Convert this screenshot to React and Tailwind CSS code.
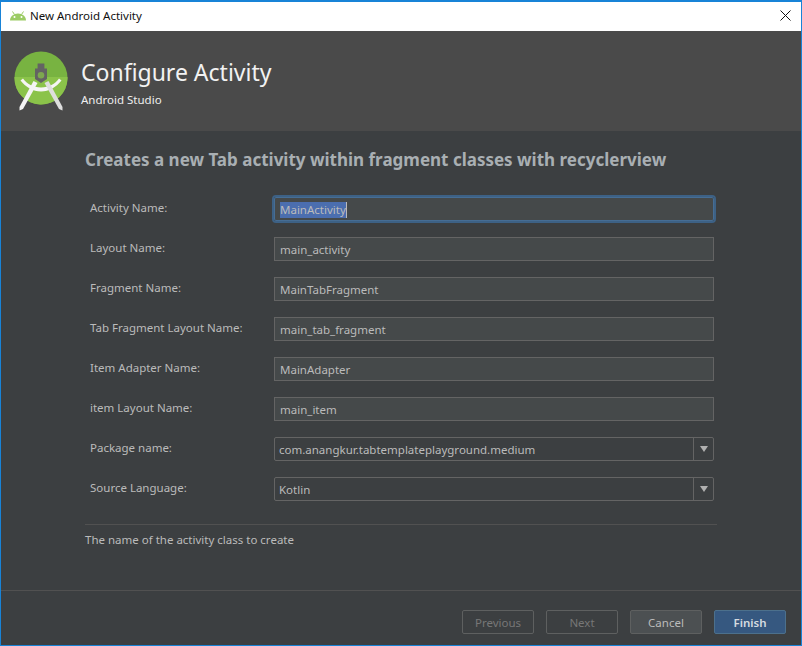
import React from "react";

const font = "font-['Noto_Sans','Open_Sans',sans-serif]";

const rows = [
  { label: "Activity Name:", value: "MainActivity", focused: true },
  { label: "Layout Name:", value: "main_activity" },
  { label: "Fragment Name:", value: "MainTabFragment" },
  { label: "Tab Fragment Layout Name:", value: "main_tab_fragment" },
  { label: "Item Adapter Name:", value: "MainAdapter" },
  { label: "item Layout Name:", value: "main_item" },
  { label: "Package name:", value: "com.anangkur.tabtemplateplayground.medium", select: true },
  { label: "Source Language:", value: "Kotlin", select: true },
];

const AndroidHead = () => (
  <svg width="18" height="10" viewBox="0 0 18 10" className="shrink-0">
    <path d="M1 9.500C1 5.500 4.500 2.500 9 2.500S17 5.500 17 9.500Z" fill="#9ccc65" />
    <path d="M3.500.5 5.500 3.500M14.500.5 12.500 3.500" stroke="#9ccc65" strokeWidth="1" />
    <circle cx="5.500" cy="6" r="1" fill="#fff" />
    <circle cx="12.500" cy="6" r="1" fill="#fff" />
  </svg>
);

const StudioLogo = () => (
  <svg width="54" height="60" viewBox="0 0 54 60" className="shrink-0">
    <circle cx="27" cy="27" r="26.500" fill="#78b341" />
    <path d="M.5 26a26.500 26.500 0 0 0 53 2q0-1 0-2Z" fill="#8bc34a" />
    <path d="M9 27.500C13 33 19 36.500 27 36.500S41 33 45 27.500L47.500 29.500C42.500 36 35 40.500 27 40.500S11.500 36 6.500 29.500Z" fill="#f5f5f5" />
    <path d="M19.500 30 23.500 32 9 58 5.500 59.500 5.500 56Z" fill="#f4f4f4" />
    <path d="M34.500 30 30.500 32 45 58 48.500 59.500 48.500 56Z" fill="#dedede" />
    <path d="M23.600 12.600h6.800v5H33V28l-6 4-6-4V17.600h2.600Z" fill="#636363" />
    <circle cx="27" cy="24.300" r="3.300" fill="#7da84f" />
  </svg>
);

const Field = ({ value, focused, select }) => {
  if (select) {
    return (
      <div className="w-[440px] h-6 flex items-stretch border border-[#646464] rounded-[2px]">
        <div className="flex-1 px-1 pt-px flex items-center text-[11.5px] text-[#bbbbbb]">{value}</div>
        <div className="w-[20px] border-l border-[#646464] flex items-center justify-center">
          <svg width="8" height="6" viewBox="0 0 8 6">
            <path d="M0 0h8L4 6Z" fill="#b0b0b0" />
          </svg>
        </div>
      </div>
    );
  }
  return (
    <div
      className={
        focused
          ? "w-[440px] h-6 flex items-center px-[5px] pt-px bg-[#45494a] rounded-[2px] outline-2 outline-[#3d6185] border border-[#466d94]"
          : "w-[440px] h-6 flex items-center px-[5px] pt-px bg-[#45494a] border border-[#646464]"
      }
    >
      {focused ? (
        <span className="bg-[#4b6eaf] text-[#bbbbbb] text-[11.5px] leading-[16px] border-r border-[#bbbbbb]">{value}</span>
      ) : (
        <span className="text-[#bbbbbb] text-[11.5px] leading-[16px]">{value}</span>
      )}
    </div>
  );
};

const Button = ({ children, kind }) => {
  const styles = {
    disabled: "border-[#5e6060] text-[#777777]",
    normal: "bg-[#4c5052] border-[#5e6060] text-[#bbbbbb]",
    primary: "bg-[#365880] border-[#4c708c] text-[#d5dbe0] font-semibold",
  };
  return (
    <div className={`w-[72px] h-6 pt-px flex items-center justify-center rounded-[2px] border text-[11.5px] ${styles[kind]}`}>
      {children}
    </div>
  );
};

export default function App() {
  return (
    <div className={`w-[802px] h-[646px] flex flex-col border border-t-2 border-[#1883d7] bg-[#3c3f41] overflow-hidden ${font}`}>
      <div className="h-[29px] shrink-0 bg-white flex items-center pl-[8px] pr-[10px] pb-[2px] gap-[3px]">
        <AndroidHead />
        <span className="text-[11.5px] text-[#111111]">New Android Activity</span>
        <svg width="11" height="11" viewBox="0 0 11 11" className="ml-auto">
          <path d="M.5.5l10 10M10.500.5l-10 10" stroke="#111" strokeWidth="1" />
        </svg>
      </div>

      <div className="h-[100px] shrink-0 bg-[#4a4a4a] flex items-start pt-[20px] pl-[13px] gap-[13px]">
        <StudioLogo />
        <div className="flex flex-col">
          <span className="text-[23px] leading-[32px] pt-[5px] text-[#f2f2f2]">Configure Activity</span>
          <span className="text-[11.5px] leading-[18px] mt-[3px] text-[#eeeeee]">Android Studio</span>
        </div>
      </div>

      <div className="flex-1 flex flex-col pl-[84px] pr-[84px]">
        <h1 className="mt-[16px] text-[17px] leading-[26px] font-bold text-[#a9afb3]">
          Creates a new Tab activity within fragment classes with recyclerview
        </h1>
        <div className="mt-[24px] flex flex-col gap-4">
          {rows.map((row) => (
            <div key={row.label} className="flex items-start h-6">
              <label className="w-[189px] pl-[5px] text-[11.5px] leading-[22px] text-[#bbbbbb]">{row.label}</label>
              <Field value={row.value} focused={row.focused} select={row.select} />
            </div>
          ))}
        </div>
        <div className="mt-[23px] h-px w-[632px] bg-[#515151]" />
        <p className="mt-[7px] text-[11.5px] leading-[16px] text-[#bbbbbb]">The name of the activity class to create</p>
      </div>

      <div className="h-[55px] shrink-0 border-t border-[#515151] flex items-start justify-end gap-3 pt-[19px] pr-[15px]">
        <Button kind="disabled">Previous</Button>
        <Button kind="disabled">Next</Button>
        <Button kind="normal">Cancel</Button>
        <Button kind="primary">Finish</Button>
      </div>
    </div>
  );
}
